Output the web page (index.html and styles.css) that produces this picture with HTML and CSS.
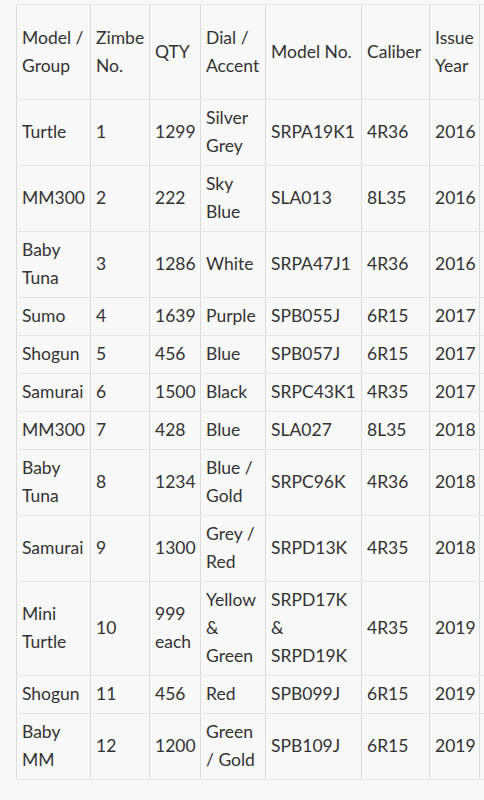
FILE: index.html
```html
<!DOCTYPE html>
<html>
<head>
<meta charset="utf-8">
<link rel="stylesheet" href="styles.css">
</head>
<body>
<div class="wrap">
<table class="grid">
<colgroup>
<col class="c1"><col class="c2"><col class="c3"><col class="c4"><col class="c5"><col class="c6"><col class="c7"><col class="c8">
</colgroup>
<thead>
<tr><th>Model / Group</th><th>Zimbe No.</th><th>QTY</th><th>Dial / Accent</th><th>Model No.</th><th>Caliber</th><th>Issue Year</th><th></th></tr>
</thead>
<tbody>
<tr><td>Turtle</td><td>1</td><td>1299</td><td>Silver Grey</td><td>SRPA19K1</td><td>4R36</td><td>2016</td><td></td></tr>
<tr><td>MM300</td><td>2</td><td>222</td><td>Sky Blue</td><td>SLA013</td><td>8L35</td><td>2016</td><td></td></tr>
<tr><td>Baby Tuna</td><td>3</td><td>1286</td><td>White</td><td>SRPA47J1</td><td>4R36</td><td>2016</td><td></td></tr>
<tr><td>Sumo</td><td>4</td><td>1639</td><td>Purple</td><td>SPB055J</td><td>6R15</td><td>2017</td><td></td></tr>
<tr><td>Shogun</td><td>5</td><td>456</td><td>Blue</td><td>SPB057J</td><td>6R15</td><td>2017</td><td></td></tr>
<tr><td>Samurai</td><td>6</td><td>1500</td><td>Black</td><td>SRPC43K1</td><td>4R35</td><td>2017</td><td></td></tr>
<tr><td>MM300</td><td>7</td><td>428</td><td>Blue</td><td>SLA027</td><td>8L35</td><td>2018</td><td></td></tr>
<tr><td>Baby Tuna</td><td>8</td><td>1234</td><td>Blue / Gold</td><td>SRPC96K</td><td>4R36</td><td>2018</td><td></td></tr>
<tr><td>Samurai</td><td>9</td><td>1300</td><td>Grey / Red</td><td>SRPD13K</td><td>4R35</td><td>2018</td><td></td></tr>
<tr><td>Mini Turtle</td><td>10</td><td>999 each</td><td>Yellow &amp; Green</td><td>SRPD17K &amp; SRPD19K</td><td>4R35</td><td>2019</td><td></td></tr>
<tr><td>Shogun</td><td>11</td><td>456</td><td>Red</td><td>SPB099J</td><td>6R15</td><td>2019</td><td></td></tr>
<tr><td>Baby MM</td><td>12</td><td>1200</td><td>Green / Gold</td><td>SPB109J</td><td>6R15</td><td>2019</td><td></td></tr>
</tbody>
</table>
</div>
</body>
</html>
```
FILE: styles.css
```css
html, body {
  margin: 0;
  background: #f8f8f8;
}
body {
  font-family: Lato, "Open Sans", sans-serif;
  color: #333;
  font-size: 17.5px;
  line-height: 28px;
}
.wrap {
  padding: 4px 0 20px 16px;
}
.grid {
  border-collapse: collapse;
  table-layout: fixed;
  width: 544px;
  background: #f8f8f8;
}
.c1 { width: 74px; }
.c2 { width: 59px; }
.c3 { width: 51px; }
.c4 { width: 65px; }
.c5 { width: 96px; }
.c6 { width: 68px; }
.c7 { width: 50px; }
.c8 { width: 80px; }
.grid th,
.grid td {
  text-align: left;
  font-weight: normal;
  vertical-align: middle;
  padding: 4px 5px 5px 5px;
  border-top: 1px solid #e6e6e6;
  border-bottom: 1px solid #e6e6e6;
  border-left: 1px solid #dcdcdc;
  border-right: 1px solid #dcdcdc;
}
.grid th {
  padding-top: 19px;
  padding-bottom: 19px;
}
```
